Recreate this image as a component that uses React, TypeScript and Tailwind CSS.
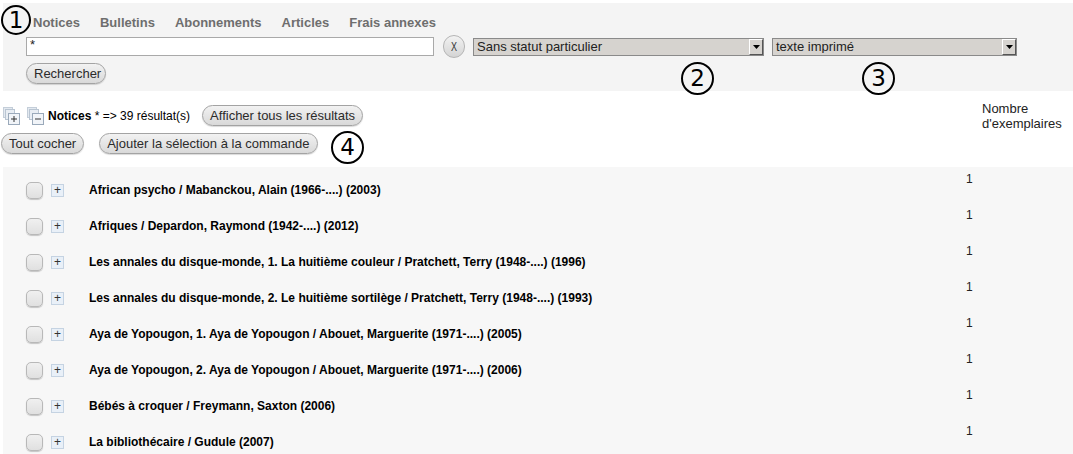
import React from 'react'

const tabs = ['Notices', 'Bulletins', 'Abonnements', 'Articles', 'Frais annexes']

const notices = [
  'African psycho / Mabanckou, Alain (1966-....) (2003)',
  'Afriques / Depardon, Raymond (1942-....) (2012)',
  'Les annales du disque-monde, 1. La huitième couleur / Pratchett, Terry (1948-....) (1996)',
  'Les annales du disque-monde, 2. Le huitième sortilège / Pratchett, Terry (1948-....) (1993)',
  'Aya de Yopougon, 1. Aya de Yopougon / Abouet, Marguerite (1971-....) (2005)',
  'Aya de Yopougon, 2. Aya de Yopougon / Abouet, Marguerite (1971-....) (2006)',
  'Bébés à croquer / Freymann, Saxton (2006)',
  'La bibliothécaire / Gudule (2007)',
]

const Pill = ({ children, className = '' }: { children: React.ReactNode; className?: string }) => (
  <button
    className={
      'h-[21px] rounded-full border border-[#a3a3a3] bg-linear-to-b from-[#f2f2f2] to-[#d9d9d9] px-[7px] text-[13px] leading-none text-[#2b2b2b] shadow-[0_1px_1px_rgba(0,0,0,0.15)] ' +
      className
    }
  >
    {children}
  </button>
)

const Select = ({ value, width }: { value: string; width: string }) => (
  <div className={'flex h-[18px] items-center border border-[#8a8a8a] bg-[#d6d3cf] ' + width}>
    <span className="flex-1 truncate pl-[3px] text-[13px] leading-none text-[#222]">{value}</span>
    <span className="flex h-[16px] w-[14px] items-center justify-center border border-t-white border-l-white border-r-[#555] border-b-[#555] bg-[#d6d3cf]">
      <svg width="7" height="4" viewBox="0 0 7 4">
        <path d="M0 0h7L3.5 4z" fill="#000" />
      </svg>
    </span>
  </div>
)

const Circled = ({ n, className }: { n: string; className: string }) => (
  <div
    className={
      'absolute flex items-center justify-center rounded-full border-2 border-black text-[23px] leading-none text-black ' +
      className
    }
    style={{ fontFamily: '"DejaVu Sans", sans-serif' }}
  >
    {n}
  </div>
)

const StackIcon = ({ minus }: { minus?: boolean }) => (
  <svg width="17" height="18" viewBox="0 0 17 18">
    <rect x="0.5" y="0.5" width="9" height="10" fill="#e3e9f0" stroke="#c4ced9" />
    <rect x="2.5" y="2.5" width="9" height="10" fill="#e8edf3" stroke="#b9c5d2" />
    <rect x="5.5" y="6.5" width="11" height="11" fill="#f1f4f8" stroke="#9aa9ba" />
    <path d="M8 12h6" stroke="#333" strokeWidth="1" />
    {!minus && <path d="M11 9v6" stroke="#333" strokeWidth="1" />}
  </svg>
)

export default function App() {
  return (
    <div
      className="relative h-[454px] w-[1073px] overflow-hidden bg-white"
      style={{ fontFamily: '"Liberation Sans", Arial, sans-serif' }}
    >
      {/* search panel */}
      <div className="ml-[3px] mt-[3px] h-[88px] bg-[#f4f4f4] pl-[23px] pt-[12px]">
        <div className="flex gap-5 pl-[7px] text-[13px] font-bold leading-[16px] text-[#6e6e6e]">
          {tabs.map((t) => (
            <span key={t}>{t}</span>
          ))}
        </div>
        <div className="mt-[4px] flex items-center">
          <div className="h-[19px] w-[408px] border border-[#a9a9a9] bg-white pl-[3px] text-[13px] leading-[14px] text-[#222]">
            *
          </div>
          <button className="ml-[9px] flex h-[23px] w-[22px] items-center justify-center rounded-full border border-[#b5b5b5] bg-linear-to-b from-[#f2f2f2] to-[#d4d4d4] text-[12px] leading-none text-[#333]">
            <span className="inline-block scale-x-75">X</span>
          </button>
          <div className="ml-[8px]">
            <Select value="Sans statut particulier" width="w-[291px]" />
          </div>
          <div className="ml-[8px]">
            <Select value="texte imprimé" width="w-[245px]" />
          </div>
        </div>
        <div className="mt-[5px] flex">
          <Pill className="w-[80px]">Rechercher</Pill>
        </div>
      </div>

      {/* results header */}
      <div className="relative h-[76px]">
        <div className="flex items-center pl-[3px] pt-[14px]">
          <StackIcon />
          <span className="ml-[7px] flex">
            <StackIcon minus />
          </span>
          <span className="ml-[4px] text-[12px] text-black">
            <b>Notices</b> * =&gt; 39 résultat(s)
          </span>
          <Pill className="ml-[12px]">Afficher tous les résultats</Pill>
        </div>
        <div className="mt-[7px] flex items-center pl-[1px]">
          <Pill>Tout cocher</Pill>
          <Pill className="ml-[15px]">Ajouter la sélection à la commande</Pill>
        </div>
        <div className="absolute left-[982px] top-[10px] text-[13px] leading-[15px] text-[#222]">
          Nombre
          <br />
          d&apos;exemplaires
        </div>
      </div>

      {/* notices list */}
      <div className="ml-[3px] bg-[#f7f7f7] pt-[5px]">
        {notices.map((n) => (
          <div key={n} className="flex h-[36px]">
            <div className="flex w-[960px] items-center pl-[23px]">
              <span className="h-[17px] w-[17px] rounded-[5px] border border-[#b8b8b8] bg-linear-to-b from-[#f0f0f0] to-[#e0e0e0] shadow-[0_1px_1px_rgba(0,0,0,0.2)]" />
              <span className="ml-[8px] flex h-[13px] w-[13px] items-center justify-center border border-[#c5d3e2] bg-[#e9f0f8] text-[12px] leading-none text-[#333]">
                +
              </span>
              <span className="ml-[25px] text-[12px] font-bold text-black">{n}</span>
            </div>
            <div className="pl-[3px] text-[12px] leading-[14px] text-[#222]">1</div>
          </div>
        ))}
      </div>

      <Circled n="1" className="left-[1px] top-[5px] h-[30px] w-[30px]" />
      <Circled n="2" className="left-[681px] top-[62px] h-[33px] w-[33px]" />
      <Circled n="3" className="left-[862px] top-[62px] h-[33px] w-[33px]" />
      <Circled n="4" className="left-[331px] top-[131px] h-[33px] w-[33px]" />
    </div>
  )
}
